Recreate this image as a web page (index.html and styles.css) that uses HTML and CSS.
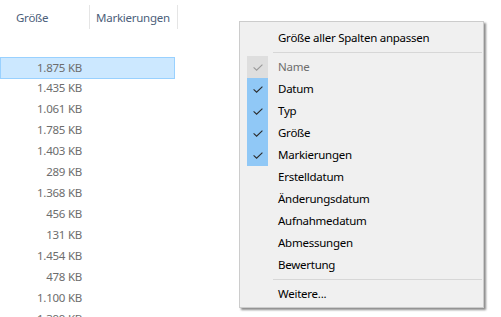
FILE: index.html
```html
<!DOCTYPE html>
<html lang="de">
<head>
<meta charset="utf-8">
<title>Spalten</title>
<link rel="stylesheet" href="styles.css">
</head>
<body>
<div class="view">
  <div class="hdr">
    <div class="hcell c1">Größe</div>
    <div class="hcell c2">Markierungen</div>
  </div>
  <div class="rows">
    <div class="row sel"><span class="size">1.875 KB</span></div>
    <div class="row"><span class="size">1.435 KB</span></div>
    <div class="row"><span class="size">1.061 KB</span></div>
    <div class="row"><span class="size">1.785 KB</span></div>
    <div class="row"><span class="size">1.403 KB</span></div>
    <div class="row"><span class="size">289 KB</span></div>
    <div class="row"><span class="size">1.368 KB</span></div>
    <div class="row"><span class="size">456 KB</span></div>
    <div class="row"><span class="size">131 KB</span></div>
    <div class="row"><span class="size">1.454 KB</span></div>
    <div class="row"><span class="size">478 KB</span></div>
    <div class="row"><span class="size">1.100 KB</span></div>
    <div class="row"><span class="size">1.399 KB</span></div>
  </div>
</div>

<div class="menu">
  <div class="item"><span class="gut"></span><span class="lbl">Größe aller Spalten anpassen</span></div>
  <div class="sep"></div>
  <div class="item dis"><span class="gut grey"><svg width="10" height="7" viewBox="0 0 10 7"><path d="M0.6 3.4 L3.6 6.2 L9.4 0.6" fill="none" stroke="#9a9a9a" stroke-width="1.1"/></svg></span><span class="lbl">Name</span></div>
  <div class="item"><span class="gut on"><svg width="10" height="7" viewBox="0 0 10 7"><path d="M0.6 3.4 L3.6 6.2 L9.4 0.6" fill="none" stroke="#2b2b2b" stroke-width="1.1"/></svg></span><span class="lbl">Datum</span></div>
  <div class="item"><span class="gut on"><svg width="10" height="7" viewBox="0 0 10 7"><path d="M0.6 3.4 L3.6 6.2 L9.4 0.6" fill="none" stroke="#2b2b2b" stroke-width="1.1"/></svg></span><span class="lbl">Typ</span></div>
  <div class="item"><span class="gut on"><svg width="10" height="7" viewBox="0 0 10 7"><path d="M0.6 3.4 L3.6 6.2 L9.4 0.6" fill="none" stroke="#2b2b2b" stroke-width="1.1"/></svg></span><span class="lbl">Größe</span></div>
  <div class="item"><span class="gut on"><svg width="10" height="7" viewBox="0 0 10 7"><path d="M0.6 3.4 L3.6 6.2 L9.4 0.6" fill="none" stroke="#2b2b2b" stroke-width="1.1"/></svg></span><span class="lbl">Markierungen</span></div>
  <div class="item"><span class="gut"></span><span class="lbl">Erstelldatum</span></div>
  <div class="item"><span class="gut"></span><span class="lbl">Änderungsdatum</span></div>
  <div class="item"><span class="gut"></span><span class="lbl">Aufnahmedatum</span></div>
  <div class="item"><span class="gut"></span><span class="lbl">Abmessungen</span></div>
  <div class="item"><span class="gut"></span><span class="lbl">Bewertung</span></div>
  <div class="sep"></div>
  <div class="item"><span class="gut"></span><span class="lbl">Weitere...</span></div>
</div>
</body>
</html>
```

FILE: styles.css
```css
html, body {
  margin: 0;
  padding: 0;
  background: #ffffff;
}
body {
  width: 501px;
  height: 317px;
  overflow: hidden;
  position: relative;
  font-family: "Noto Sans", "Open Sans", sans-serif;
  font-size: 11.5px;
  letter-spacing: -0.25px;
}
.view {
  display: flex;
  flex-direction: column;
}
.hdr {
  display: flex;
  padding-top: 5px;
  height: 24px;
}
.hcell {
  display: flex;
  align-items: center;
  height: 24px;
  color: #4c607a;
  border-right: 1px solid #e5e5e5;
  box-sizing: border-box;
}
.c1 {
  width: 90px;
  padding-left: 16px;
}
.c2 {
  width: 88px;
  padding-left: 6px;
}
.rows {
  display: flex;
  flex-direction: column;
  padding-top: 28px;
}
.row {
  width: 175px;
  height: 21px;
  box-sizing: border-box;
  display: flex;
  align-items: center;
  padding-bottom: 2px;
  border: 1px solid transparent;
  color: #6d6d6d;
}
.row.sel {
  background: #cce8ff;
  border-color: #99d1ff;
  height: 22px;
  margin-bottom: -1px;
}
.size {
  width: 81px;
  text-align: right;
}
.menu {
  position: absolute;
  left: 239px;
  top: 21px;
  width: 245px;
  height: 287px;
  box-sizing: border-box;
  background: #f0f0f0;
  border: 1px solid #cccccc;
  padding: 5px 0 2px 0;
  box-shadow: 2px 2px 2px rgba(0, 0, 0, 0.45);
  display: flex;
  flex-direction: column;
  color: #000000;
}
.item {
  display: flex;
  align-items: center;
  height: 22px;
  padding-left: 7px;
}
.gut {
  width: 21px;
  height: 22px;
  display: flex;
  align-items: center;
  justify-content: center;
  flex: none;
}
.gut.on {
  background: #90c8f6;
}
.gut.grey {
  background: #dedede;
}
.lbl {
  margin-left: 10px;
  padding-bottom: 2px;
  white-space: nowrap;
}
.dis .lbl {
  color: #6d6d6d;
}
.sep {
  height: 1px;
  margin: 3px 1px 3px 33px;
  background: #d7d7d7;
}
```
